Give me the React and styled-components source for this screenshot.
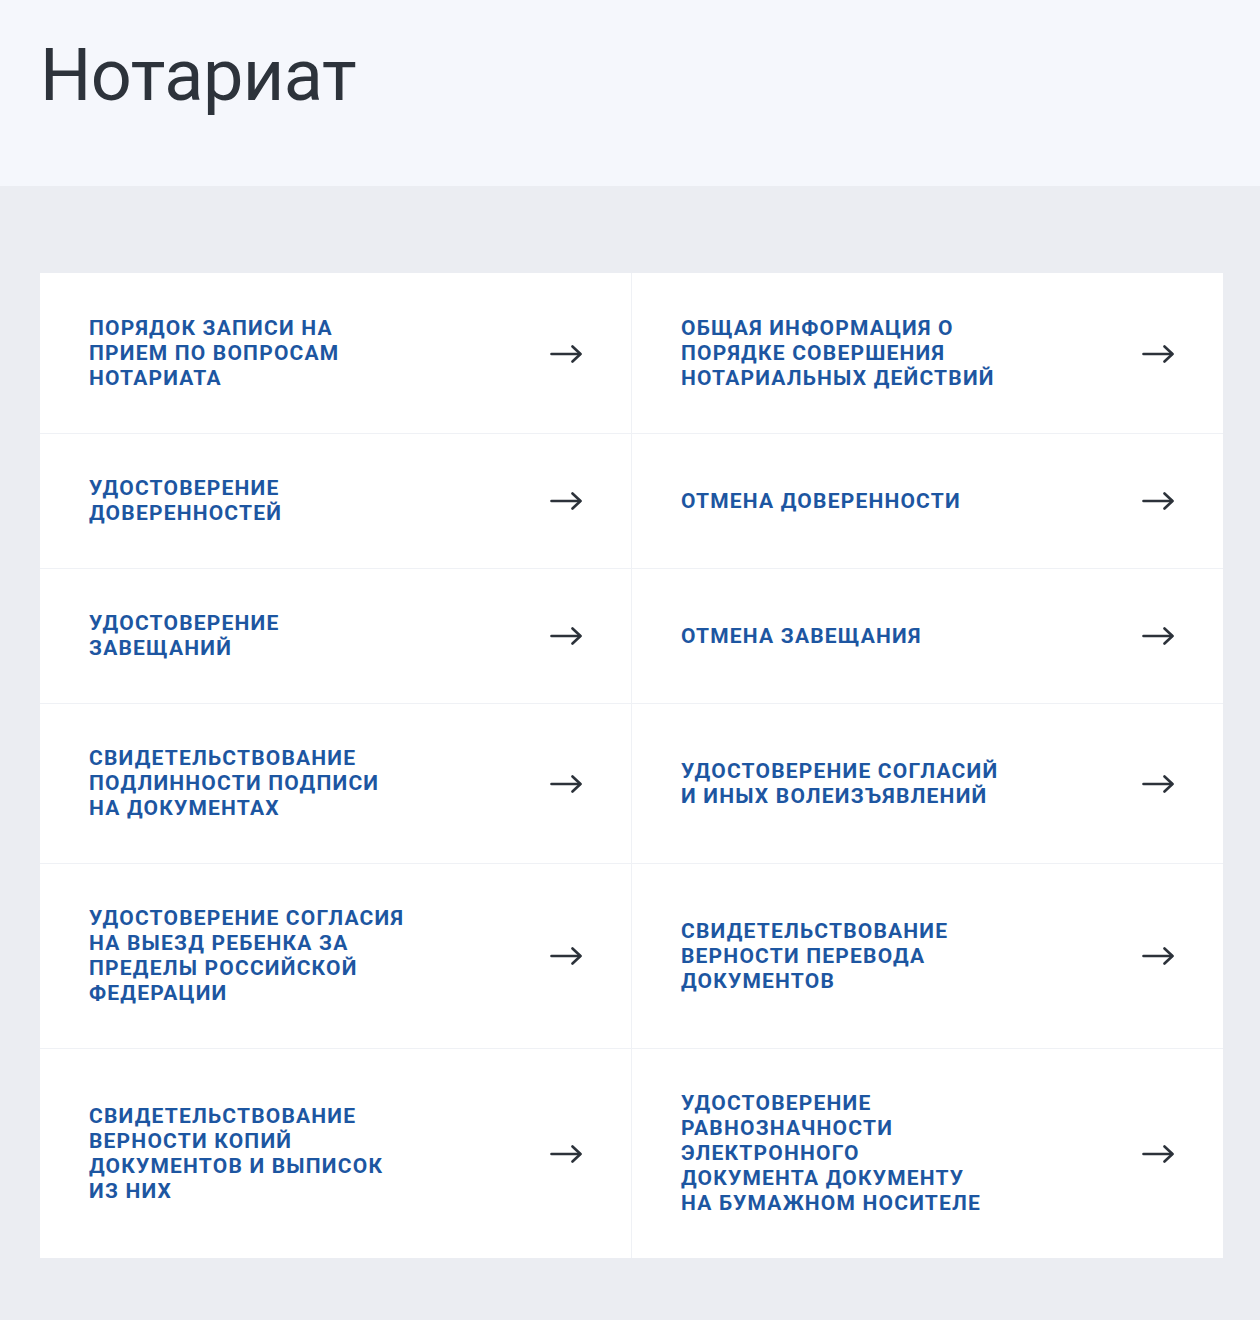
import React from "react";
import styled, { createGlobalStyle } from "styled-components";

const Global = createGlobalStyle`
  html, body { margin: 0; padding: 0; }
  body {
    background: #ebedf2;
    font-family: Roboto, "Noto Sans", Arial, sans-serif;
    -webkit-font-smoothing: antialiased;
  }
`;

const Page = styled.div`
  min-height: 1320px;
  background: #ebedf2;
`;

const Header = styled.header`
  background: #f5f7fc;
  padding: 40px 40px 74px 40px;
`;

const Title = styled.h1`
  margin: 0;
  font-family: Roboto, "Noto Sans", sans-serif;
  font-weight: 400;
  font-size: 72px;
  line-height: 1;
  color: #2d333b;
  letter-spacing: -0.5px;
`;

const Body = styled.main`
  padding: 87px 37px 62px 40px;
`;

const Grid = styled.div`
  display: grid;
  grid-template-columns: 591px 592px;
  background: #ffffff;
`;

const Cell = styled.a`
  display: flex;
  align-items: center;
  justify-content: space-between;
  gap: 24px;
  padding: ${(p) => (p.$first ? "43px" : "42px")} 49px 42px 49px;
  border-top: ${(p) => (p.$first ? "none" : "1px solid #eff1f5")};
  border-left: ${(p) => (p.$right ? "1px solid #eff1f5" : "none")};
  text-decoration: none;
  cursor: pointer;
`;

const Label = styled.span`
  font-family: Roboto, "Noto Sans", sans-serif;
  font-weight: 700;
  font-size: 21px;
  line-height: 25px;
  letter-spacing: 1.2px;
  text-transform: uppercase;
  color: #1d56a1;
`;

const ArrowBox = styled.span`
  flex: none;
  display: flex;
  width: 32px;
  height: 24px;
  color: #2c323a;
`;

const Arrow = () => (
  <ArrowBox>
    <svg width="32" height="24" viewBox="0 0 32 24" fill="none">
      <path d="M1.5 12 H30" stroke="currentColor" strokeWidth="2.6" strokeLinecap="round" />
      <path d="M22.5 4.5 L30.5 12 L22.5 19.5" stroke="currentColor" strokeWidth="2.6" strokeLinecap="round" strokeLinejoin="round" />
    </svg>
  </ArrowBox>
);

const items = [
  ["Порядок записи на", "прием по вопросам", "нотариата"],
  ["Общая информация о", "порядке совершения", "нотариальных действий"],
  ["Удостоверение", "доверенностей"],
  ["Отмена доверенности"],
  ["Удостоверение", "завещаний"],
  ["Отмена завещания"],
  ["Свидетельствование", "подлинности подписи", "на документах"],
  ["Удостоверение согласий", "и иных волеизъявлений"],
  ["Удостоверение согласия", "на выезд ребенка за", "пределы Российской", "Федерации"],
  ["Свидетельствование", "верности перевода", "документов"],
  ["Свидетельствование", "верности копий", "документов и выписок", "из них"],
  ["Удостоверение", "равнозначности", "электронного", "документа документу", "на бумажном носителе"],
];

export default function App() {
  return (
    <Page>
      <Global />
      <Header>
        <Title>Нотариат</Title>
      </Header>
      <Body>
        <Grid>
          {items.map((lines, i) => (
            <Cell key={i} $first={i < 2} $right={i % 2 === 1}>
              <Label>
                {lines.map((l, j) => (
                  <React.Fragment key={j}>
                    {j > 0 && <br />}
                    {l}
                  </React.Fragment>
                ))}
              </Label>
              <Arrow />
            </Cell>
          ))}
        </Grid>
      </Body>
    </Page>
  );
}
